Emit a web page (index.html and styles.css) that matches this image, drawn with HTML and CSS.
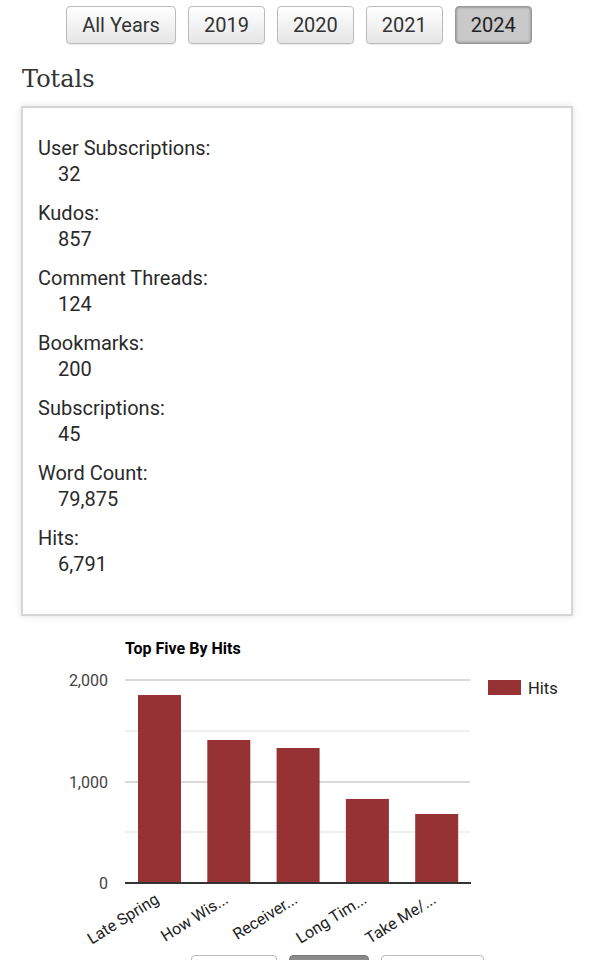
FILE: index.html
```html
<!DOCTYPE html>
<html lang="en">
<head>
    <meta charset="UTF-8">
    <meta name="viewport" content="width=device-width, initial-scale=1.0">
    <title>Stats</title>
    <link rel="stylesheet" href="styles.css">
</head>
<body>
    <div class="year-filter">
        <button class="year-btn">All Years</button>
        <button class="year-btn">2019</button>
        <button class="year-btn">2020</button>
        <button class="year-btn">2021</button>
        <button class="year-btn selected">2024</button>
    </div>

    <h3 class="heading">Totals</h3>
    <div class="totals">
        <dl class="stat-list">
            <dt>User Subscriptions:</dt>
            <dd>32</dd>
            <dt>Kudos:</dt>
            <dd>857</dd>
            <dt>Comment Threads:</dt>
            <dd>124</dd>
            <dt>Bookmarks:</dt>
            <dd>200</dd>
            <dt>Subscriptions:</dt>
            <dd>45</dd>
            <dt>Word Count:</dt>
            <dd>79,875</dd>
            <dt>Hits:</dt>
            <dd>6,791</dd>
        </dl>
    </div>

    <div class="chart">
        <svg class="chart-svg" viewBox="0 0 594 320" width="594" height="320">
            <text class="chart-title" x="125" y="26">Top Five By Hits</text>
            <g class="grid">
                <line class="minor" x1="125" y1="103" x2="470" y2="103"></line>
                <line class="minor" x1="125" y1="204" x2="470" y2="204"></line>
                <line x1="125" y1="52" x2="470" y2="52"></line>
                <line x1="125" y1="154" x2="470" y2="154"></line>
            </g>
            <g class="y-labels">
                <text x="108" y="58">2,000</text>
                <text x="108" y="160">1,000</text>
                <text x="108" y="261">0</text>
            </g>
            <g id="bars"></g>
            <line class="baseline" x1="125" y1="255" x2="471" y2="255"></line>
            <g id="xLabels"></g>
            <rect class="legend-swatch" x="488" y="52" width="33" height="15"></rect>
            <text class="legend-text" x="528" y="66">Hits</text>
        </svg>
    </div>

    <div class="chart-type">
        <button class="type-btn"></button>
        <button class="type-btn selected"></button>
        <button class="type-btn"></button>
    </div>

    <script>
        const works = [
            { title: 'Late Spring', hits: 1852 },
            { title: 'How Wis...', hits: 1409 },
            { title: 'Receiver...', hits: 1330 },
            { title: 'Long Tim...', hits: 828 },
            { title: 'Take Me/...', hits: 680 }
        ];

        // Draw bars and x labels
        const svgNS = 'http://www.w3.org/2000/svg';
        const barsGroup = document.getElementById('bars');
        const labelsGroup = document.getElementById('xLabels');
        const baseY = 255;
        const scale = 203 / 2000;

        works.forEach((work, index) => {
            const x = 138 + index * 69.3;
            const h = work.hits * scale;

            const bar = document.createElementNS(svgNS, 'rect');
            bar.setAttribute('x', x);
            bar.setAttribute('y', baseY - h);
            bar.setAttribute('width', 43);
            bar.setAttribute('height', h);
            bar.setAttribute('class', 'bar');
            barsGroup.appendChild(bar);

            const lx = x + 22;
            const ly = 274;
            const label = document.createElementNS(svgNS, 'text');
            label.setAttribute('x', lx);
            label.setAttribute('y', ly);
            label.setAttribute('transform', `rotate(-32 ${lx} ${ly})`);
            label.textContent = work.title;
            labelsGroup.appendChild(label);
        });
    </script>
</body>
</html>
```

FILE: styles.css
```css
body {
    font-family: Roboto, "Liberation Sans", sans-serif;
    margin: 0;
    padding: 0;
    background-color: #fff;
    color: #2a2a2a;
}
.year-filter {
    display: flex;
    justify-content: center;
    gap: 12px;
    padding-top: 6px;
    padding-left: 4px;
}
.year-btn,
.type-btn {
    font-family: Roboto, "Liberation Sans", sans-serif;
    font-size: 20px;
    color: #333;
    height: 38px;
    padding: 0 15px;
    border: 1px solid #bbb;
    border-radius: 4px;
    background: linear-gradient(#fff, #e6e6e6);
    box-shadow: 0 1px 1px rgba(0, 0, 0, 0.08);
}
.year-btn.selected {
    color: #222;
    background: #c9c9c9;
    border-color: #999;
    box-shadow: inset 0 0 3px rgba(0, 0, 0, 0.45);
}
.heading {
    font-family: "DejaVu Serif", "Liberation Serif", serif;
    font-weight: normal;
    font-size: 24px;
    color: #333;
    margin: 20px 0 12px 22px;
    line-height: 30px;
}
.totals {
    margin: 0 21px;
    height: 506px;
    border: 2px solid #d6d6d6;
    box-shadow: 0 0 7px rgba(0, 0, 0, 0.12);
    padding: 0 15px;
}
.stat-list {
    margin: 27px 0 0;
    font-size: 20px;
    line-height: 26px;
}
.stat-list dt {
    color: #2a2a2a;
}
.stat-list dd {
    margin: 0 0 13px 20px;
}
.chart {
    margin-top: 12px;
}
.chart-svg {
    display: block;
    font-family: Roboto, "Liberation Sans", sans-serif;
}
.chart-title {
    font-size: 16px;
    font-weight: bold;
    fill: #000;
}
.grid line {
    stroke: #ccc;
    stroke-width: 1.5;
}
.grid line.minor {
    stroke: #ebebeb;
}
.y-labels text {
    font-size: 16px;
    fill: #444;
    text-anchor: end;
}
.bar {
    fill: #963234;
}
.baseline {
    stroke: #333;
    stroke-width: 2;
}
#xLabels text {
    font-size: 16px;
    fill: #222;
    text-anchor: end;
}
.legend-swatch {
    fill: #963234;
}
.legend-text {
    font-size: 16.5px;
    fill: #222;
}
.chart-type {
    display: flex;
    justify-content: center;
    gap: 12px;
    margin-top: 7px;
    margin-left: 80px;
}
.type-btn {
    width: 86px;
}
.type-btn:nth-child(3) {
    width: 103px;
}
.type-btn.selected {
    width: 80px;
    background: linear-gradient(#888, #aaa);
    border-color: #777;
}
```
